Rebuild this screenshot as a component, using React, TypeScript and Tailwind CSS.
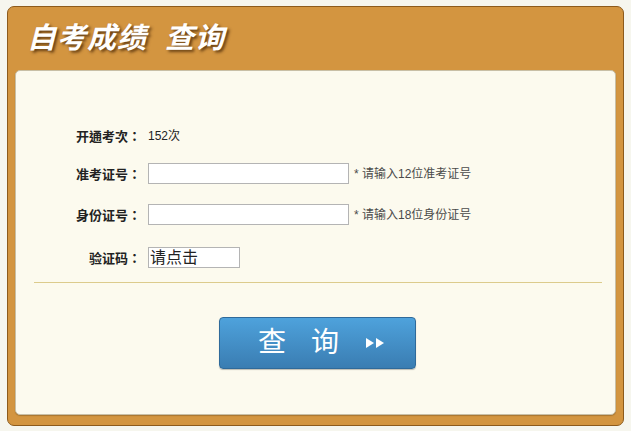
import React from 'react';

const cjk = "font-['Liberation_Sans','Noto_Sans_CJK_SC',sans-serif]";

const Row: React.FC<{ label: string; className?: string; children: React.ReactNode }> = ({ label, className, children }) => (
  <div className={`flex h-[21px] items-center ${className ?? ''}`}>
    <div className="w-[125px] text-right font-['Noto_Sans_CJK_TC',sans-serif] text-[13px] font-bold text-[#222]">{label}</div>
    <div className="ml-[7px] flex items-center">{children}</div>
  </div>
);

export default function App() {
  return (
    <div className={`h-[431px] w-[631px] bg-[#f6f6ee] pl-[7px] pt-[6px] ${cjk}`}>
      <div className="flex h-[420px] w-[617px] flex-col rounded-[7px] border border-[#8d5b1c] bg-[#d39540]">
        <div className="flex h-[63px] items-center pl-[19px]">
          <h1 className="text-[29px] font-bold italic leading-none tracking-[1px] text-white [text-shadow:2px_2px_3px_rgba(60,30,0,0.75)]">
            自考成绩<span className="ml-[18px]">查询</span>
          </h1>
        </div>
        <div className="mx-[7px] h-[345px] rounded-[5px] border border-[#c8bfa6] bg-[#fcfaee] shadow-[0_1px_1px_rgba(90,60,20,0.35)]">
          <Row label="开通考次：" className="mt-[54px]">
            <span className="text-[12px] text-[#222]">152次</span>
          </Row>
          <Row label="准考证号：" className="mt-[17px]">
            <input className="h-[21px] w-[201px] border border-[#b4b4b4] bg-white" />
            <span className="ml-[5px] text-[12px] text-[#4a4a4a]">* 请输入12位准考证号</span>
          </Row>
          <Row label="身份证号：" className="mt-[20px]">
            <input className="h-[21px] w-[201px] border border-[#b4b4b4] bg-white" />
            <span className="ml-[5px] text-[12px] text-[#4a4a4a]">* 请输入18位身份证号</span>
          </Row>
          <Row label="验证码：" className="mt-[22px]">
            <div className="flex h-[21px] w-[92px] items-center border border-[#b4b4b4] bg-white pl-[1px] text-[16px] leading-none text-[#222]">
              请点击
            </div>
          </Row>
          <div className="ml-[18px] mr-[13px] mt-[14px] h-px bg-[#dccb8c]" />
          <button className="ml-[203px] mt-[34px] flex h-[52px] w-[197px] items-center rounded-[4px] border border-[#2f6a9a] bg-gradient-to-b from-[#4ea2dc] to-[#3a7db2] pl-[38px] text-white shadow-[0_1px_1px_rgba(0,0,0,0.25)]">
            <span className="text-[28px] leading-none">查</span>
            <span className="ml-[25px] text-[28px] leading-none">询</span>
            <svg className="ml-[26px]" width="20" height="12" viewBox="0 0 20 12">
              <polygon points="1,1 9,6 1,11" fill="white" />
              <polygon points="11,1 19,6 11,11" fill="white" />
            </svg>
          </button>
        </div>
      </div>
    </div>
  );
}
